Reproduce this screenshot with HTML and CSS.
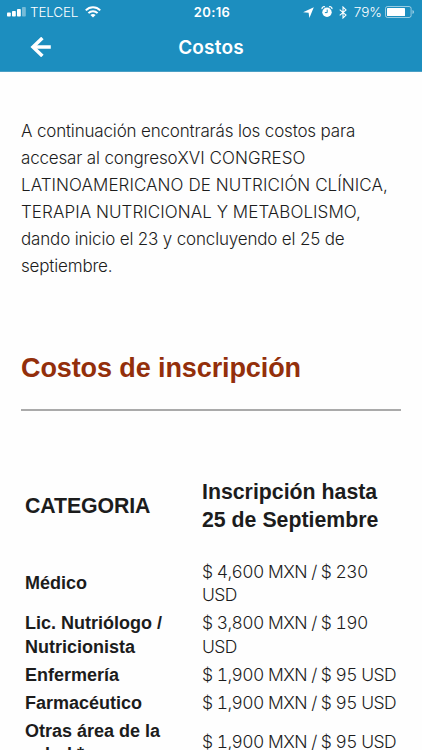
FILE: index.html
```html
<!DOCTYPE html>
<html lang="es">
<head>
    <meta charset="UTF-8">
    <meta name="viewport" content="width=device-width, initial-scale=1.0">
    <title>Costos</title>
    <link rel="stylesheet" href="styles.css">
</head>
<body>
    <header class="header">
        <div class="status-bar">
            <div class="status-left">
                <svg class="signal" width="19" height="10" viewBox="0 0 19 10" fill="#fff">
                    <rect x="0" y="5.5" width="3.8" height="4" rx="0.8"/>
                    <rect x="5" y="4" width="3.8" height="5.5" rx="0.8"/>
                    <rect x="10" y="2" width="3.8" height="7.5" rx="0.8"/>
                    <rect x="15" y="0" width="3.8" height="9.5" rx="0.8" opacity="0.4"/>
                </svg>
                <span class="carrier">TELCEL</span>
                <svg class="wifi" width="16" height="12" viewBox="0 0 16 12" fill="none" stroke="#fff" stroke-width="2">
                    <path d="M0.8 4.4C4.8 0.2 11.2 0.2 15.2 4.4"/>
                    <path d="M3.4 7.1C6 4.5 10 4.5 12.6 7.1"/>
                    <path d="M8 11.6L5.4 9C6.8 7.6 9.2 7.6 10.6 9Z" fill="#fff" stroke="none"/>
                </svg>
            </div>
            <span class="time">20:16</span>
            <div class="status-right">
                <svg class="location" width="11" height="11" viewBox="0 0 11 11" fill="#fff">
                    <path d="M10.8 0.2L6.4 10.9L5.6 5.8L0.1 5.2Z"/>
                </svg>
                <svg class="alarm" width="12" height="12" viewBox="0 0 11 12">
                    <circle cx="5.5" cy="6.3" r="4.7" fill="#fff"/>
                    <path d="M0.6 3.2A2 2 0 0 1 3.4 0.9M7.6 0.9A2 2 0 0 1 10.4 3.2" fill="none" stroke="#fff" stroke-width="1.2"/>
                    <path d="M5.7 3.6V6.6H3.4" fill="none" stroke="#1c8ebf" stroke-width="1"/>
                </svg>
                <svg class="bluetooth" width="8" height="13" viewBox="0 0 8 13" fill="none" stroke="#fff" stroke-width="1.1">
                    <path d="M0.7 3.7L7 9.1L4 12V1L7 3.9L0.7 9.3"/>
                </svg>
                <span class="percent">79%</span>
                <svg class="battery" width="30" height="12" viewBox="0 0 30 12">
                    <rect x="0.5" y="0.5" width="25.6" height="11" rx="2" fill="none" stroke="#fff" stroke-opacity="0.55"/>
                    <rect x="2" y="2" width="18" height="8" rx="0.6" fill="#fff"/>
                    <path d="M27.5 4V8Q29 7.4 29 6T27.5 4Z" fill="#fff" opacity="0.6"/>
                </svg>
            </div>
        </div>
        <div class="nav-bar">
            <svg class="back" width="21" height="20" viewBox="0 0 21 20" fill="none" stroke="#fff" stroke-width="3.5">
                <path d="M20.8 10H3"/>
                <path d="M12.4 1L3 10L12.4 19"/>
            </svg>
            <h1 class="title">Costos</h1>
        </div>
    </header>

    <main class="content">
        <p class="intro">A continuación encontrarás los costos para<br>
            accesar al congreso<span class="event">XVI CONGRESO<br>
            LATINOAMERICANO DE NUTRICIÓN CLÍNICA,<br>
            TERAPIA NUTRICIONAL Y METABOLISMO,</span><br>
            dando inicio el 23 y concluyendo el 25 de<br>
            septiembre.</p>

        <h2 class="section-title">Costos de inscripción</h2>
        <hr class="line">

        <table class="prices">
            <thead>
                <tr>
                    <th>CATEGORIA</th>
                    <th>Inscripción hasta<br>25 de Septiembre</th>
                </tr>
            </thead>
            <tbody>
                <tr>
                    <td class="category">Médico</td>
                    <td class="price">$ 4,600 MXN / $ 230<br>USD</td>
                </tr>
                <tr>
                    <td class="category">Lic. Nutriólogo /<br>Nutricionista</td>
                    <td class="price">$ 3,800 MXN / $ 190<br>USD</td>
                </tr>
                <tr>
                    <td class="category">Enfermería</td>
                    <td class="price">$ 1,900 MXN / $ 95 USD</td>
                </tr>
                <tr>
                    <td class="category">Farmacéutico</td>
                    <td class="price">$ 1,900 MXN / $ 95 USD</td>
                </tr>
                <tr>
                    <td class="category">Otras área de la<br>salud *</td>
                    <td class="price">$ 1,900 MXN / $ 95 USD</td>
                </tr>
            </tbody>
        </table>
    </main>
</body>
</html>
```
FILE: styles.css
```css
* {
    box-sizing: border-box;
}
body {
    margin: 0;
    height: 750px;
    overflow: hidden;
    background: #fefefe;
    color: #1c1c1c;
    font-family: "Liberation Sans", Arial, sans-serif;
}

.header {
    height: 72px;
    background: #1c8ebf;
    border-bottom: 1px solid #4a9fc5;
    color: #fff;
    font-family: Inter, sans-serif;
}
.status-bar {
    display: grid;
    grid-template-columns: 1fr auto 1fr;
    align-items: center;
    height: 24px;
    padding: 0 7px;
    font-size: 13.5px;
}
.status-left,
.status-right {
    display: flex;
    align-items: center;
}
.status-right {
    justify-content: flex-end;
}
.carrier {
    margin-left: 4px;
    font-weight: 300;
    letter-spacing: -0.2px;
}
.wifi {
    margin-left: 7px;
}
.time {
    padding-left: 2px;
    font-size: 13px;
    font-weight: 600;
    letter-spacing: 0.4px;
}
.alarm {
    margin-left: 7px;
}
.bluetooth {
    margin-left: 6px;
}
.percent {
    margin: 0 3px 0 7px;
    font-weight: 300;
}
.nav-bar {
    display: grid;
    grid-template-columns: 1fr auto 1fr;
    align-items: center;
    height: 46px;
    padding: 0 30px;
}
.title {
    margin: 0;
    font-size: 19px;
    font-weight: 600;
    letter-spacing: 0.2px;
}

.content {
    padding: 46px 21px 0;
}
.intro {
    margin: 0;
    font-family: Inter, sans-serif;
    font-size: 17px;
    font-weight: 300;
    line-height: 27px;
    letter-spacing: -0.17px;
    white-space: nowrap;
}
.event {
    letter-spacing: 0.06px;
}
.section-title {
    margin: 71px 0 0;
    color: #932f0b;
    font-size: 27px;
    line-height: 34px;
    letter-spacing: -0.1px;
}
.line {
    height: 2px;
    margin: 24px 0 0;
    border: 0;
    background: #aaa;
}

.prices {
    width: 380px;
    margin-top: 62px;
    border-collapse: collapse;
    table-layout: fixed;
    white-space: nowrap;
}
.prices th {
    height: 65px;
    padding: 0 4px;
    font-size: 21.3px;
    line-height: 28px;
    text-align: left;
}
.prices th:first-child {
    width: 177px;
    letter-spacing: -0.1px;
}
.prices tbody::before {
    content: "";
    display: block;
    height: 19.5px;
}
.prices td {
    padding: 2px 4px 2.5px;
    font-size: 17.5px;
    line-height: 23.5px;
}
.prices .category {
    padding: 3px 4px 1.5px;
    font-size: 18px;
    font-weight: bold;
}
.prices .price {
    font-family: Inter, sans-serif;
    font-weight: 300;
    font-variant-numeric: tabular-nums;
    letter-spacing: -0.55px;
}
```
